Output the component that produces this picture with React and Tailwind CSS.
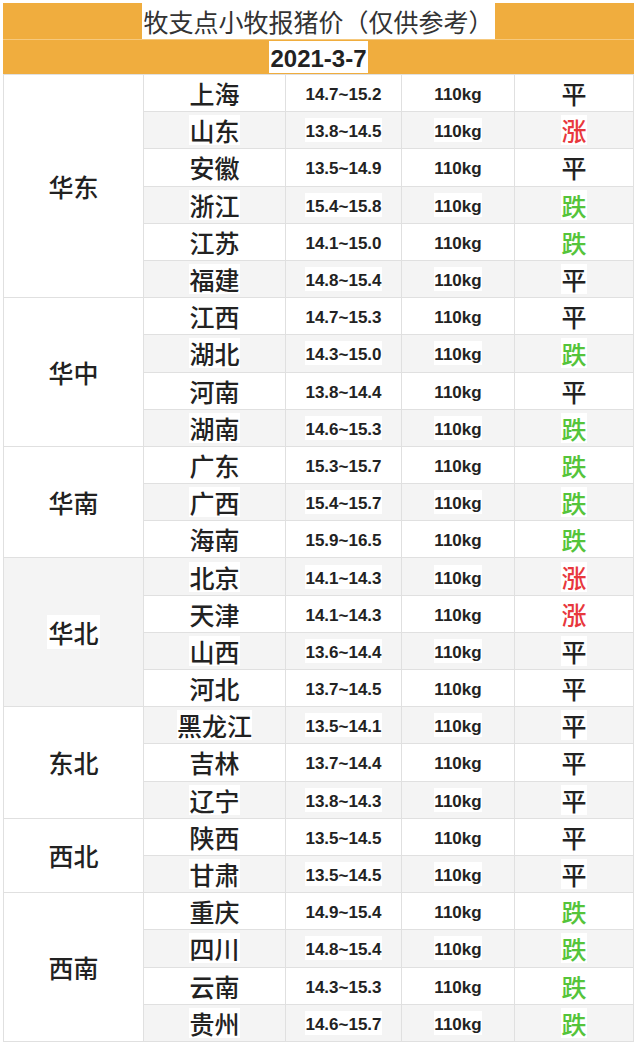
const regions = [
  {
    name: "华东",
    span: "row-span-6",
    bg: "bg-white",
    rows: [
      ["上海", "14.7~15.2", "平"],
      ["山东", "13.8~14.5", "涨"],
      ["安徽", "13.5~14.9", "平"],
      ["浙江", "15.4~15.8", "跌"],
      ["江苏", "14.1~15.0", "跌"],
      ["福建", "14.8~15.4", "平"],
    ],
  },
  {
    name: "华中",
    span: "row-span-4",
    bg: "bg-white",
    rows: [
      ["江西", "14.7~15.3", "平"],
      ["湖北", "14.3~15.0", "跌"],
      ["河南", "13.8~14.4", "平"],
      ["湖南", "14.6~15.3", "跌"],
    ],
  },
  {
    name: "华南",
    span: "row-span-3",
    bg: "bg-white",
    rows: [
      ["广东", "15.3~15.7", "跌"],
      ["广西", "15.4~15.7", "跌"],
      ["海南", "15.9~16.5", "跌"],
    ],
  },
  {
    name: "华北",
    span: "row-span-4",
    bg: "bg-[#f4f4f4]",
    rows: [
      ["北京", "14.1~14.3", "涨"],
      ["天津", "14.1~14.3", "涨"],
      ["山西", "13.6~14.4", "平"],
      ["河北", "13.7~14.5", "平"],
    ],
  },
  {
    name: "东北",
    span: "row-span-3",
    bg: "bg-white",
    rows: [
      ["黑龙江", "13.5~14.1", "平"],
      ["吉林", "13.7~14.4", "平"],
      ["辽宁", "13.8~14.3", "平"],
    ],
  },
  {
    name: "西北",
    span: "row-span-2",
    bg: "bg-white",
    rows: [
      ["陕西", "13.5~14.5", "平"],
      ["甘肃", "13.5~14.5", "平"],
    ],
  },
  {
    name: "西南",
    span: "row-span-4",
    bg: "bg-white",
    rows: [
      ["重庆", "14.9~15.4", "跌"],
      ["四川", "14.8~15.4", "跌"],
      ["云南", "14.3~15.3", "跌"],
      ["贵州", "14.6~15.7", "跌"],
    ],
  },
];

const trendColor = {
  平: "text-[#222]",
  涨: "text-[#e8383d]",
  跌: "text-[#55c43a]",
};

const cjk = "font-['Noto_Sans_CJK_SC',sans-serif]";
const num = "font-['Liberation_Sans','Noto_Sans_CJK_SC',sans-serif]";

// one cell of the grid, text sits on a white "highlight" like the copied sheet
function Cell({ bg, children }) {
  return <div className={`${bg} flex items-center justify-center`}>{children}</div>;
}

export default function App() {
  let idx = 0;
  const cells = [];

  regions.forEach((r) => {
    cells.push(
      <div key={r.name} className={`${r.span} ${r.bg} flex items-center justify-center`}>
        <span className={`${cjk} inline-block bg-white px-px text-[25px] leading-[34px] font-medium text-[#222]`}>
          {r.name}
        </span>
      </div>
    );
    r.rows.forEach(([prov, price, trend]) => {
      const bg = idx % 2 === 1 ? "bg-[#f4f4f4]" : "bg-white";
      idx++;
      cells.push(
        <Cell key={prov + "p"} bg={bg}>
          <span className={`${cjk} inline-block bg-white text-[25px] leading-[30px] font-medium text-[#222]`}>{prov}</span>
        </Cell>,
        <Cell key={prov + "r"} bg={bg}>
          <span className={`${num} inline-block bg-white pt-[4px] text-[17px] leading-[20px] font-bold text-[#222]`}>{price}</span>
        </Cell>,
        <Cell key={prov + "w"} bg={bg}>
          <span className={`${num} inline-block bg-white pt-[4px] text-[17px] leading-[20px] font-bold text-[#222]`}>110kg</span>
        </Cell>,
        <Cell key={prov + "t"} bg={bg}>
          <span className={`${cjk} inline-block bg-white text-[25px] leading-[30px] font-medium ${trendColor[trend]}`}>{trend}</span>
        </Cell>
      );
    });
  });

  return (
    <div className="bg-white min-h-[1051px] pt-[3px] pl-[3px]">
      <div className="w-[631px]">
        {/* header */}
        <div className="bg-[#f0ad3e] h-[36px] flex items-stretch justify-center">
          <span className={`${cjk} bg-white px-px flex items-center text-[25px] text-[#333] leading-none`}>
            牧支点小牧报猪价（仅供参考）
          </span>
        </div>
        <div className="h-px bg-[#f6c97d]" />
        <div className="bg-[#f0ad3e] h-[34px] flex items-center justify-center">
          <span className={`${num} bg-white inline-block px-px pt-[3px] text-[24px] leading-[29px] font-bold text-[#222]`}>
            2021-3-7
          </span>
        </div>

        {/* table body */}
        <div className="grid grid-cols-[139px_141px_115px_112px_118px] auto-rows-[36.2px] gap-px p-px bg-[#e0e0e0]">
          {cells}
        </div>
      </div>
    </div>
  );
}
